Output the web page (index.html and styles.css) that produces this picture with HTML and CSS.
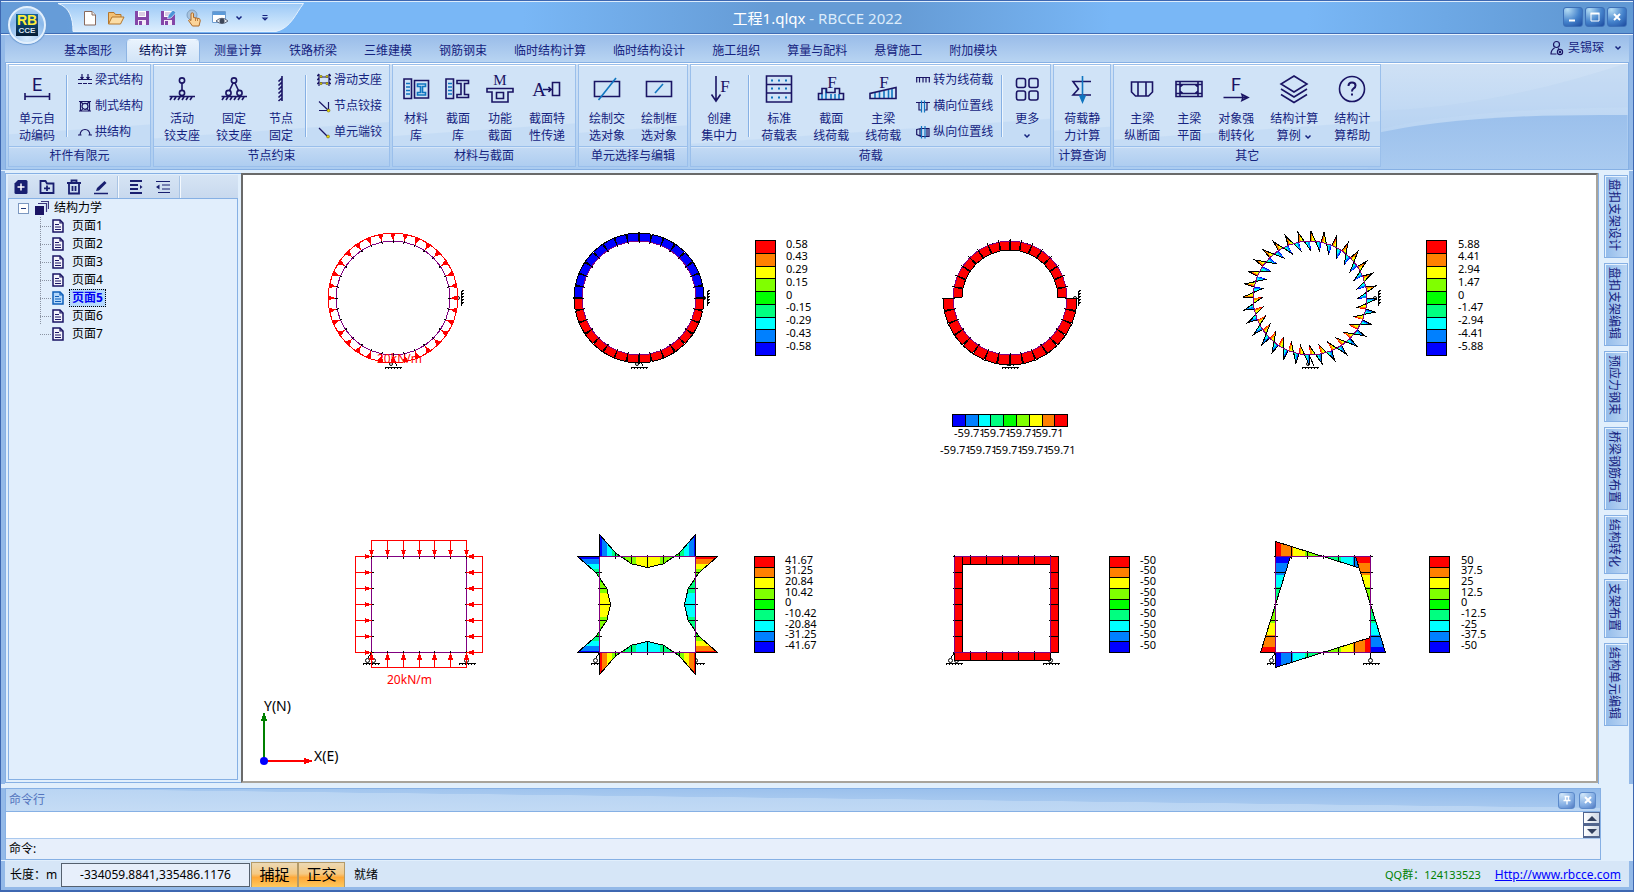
FILE: index.html
```
<!DOCTYPE html>
<html lang="zh-CN">
<head>
<meta charset="utf-8">
<title>工程1.qlqx - RBCCE 2022</title>
<link rel="stylesheet" href="styles.css">
</head>
<body>
<header class="titlebar">
  <div class="orb-space"></div>
  <button class="orb" aria-label="应用菜单"><span class="orb-logo"><span class="orb-rb">RB</span><span class="orb-cce">CCE</span></span></button>
  <div class="qat">
    <svg class="qat-shape" viewBox="0 0 246 30" preserveAspectRatio="none"><defs><linearGradient id="qg" x1="0" y1="0" x2="0" y2="1"><stop offset="0" stop-color="#9cc8f6"/><stop offset=".5" stop-color="#bcdcfa"/><stop offset="1" stop-color="#dcedfd"/></linearGradient></defs><path d="M0 .5C11 4 15 14 15 28.500H218C233 25 238 10 245.500.5Z" fill="url(#qg)" stroke="#e6f2fe"/></svg>
    <button class="qat-btn" aria-label="新建"><svg width="18" height="18" viewBox="0 0 18 18"><path d="M3.500 2.500H11L14.500 6V16H3.500Z" fill="#fff" stroke="#8a6a5c"/><path d="M11 2.500V6H14.500" fill="#eee" stroke="#8a6a5c"/></svg></button>
    <button class="qat-btn" aria-label="打开"><svg width="18" height="18" viewBox="0 0 18 18"><path d="M1.500 15V3.500H7L8.500 5.500H14V8" fill="#f3c074" stroke="#b5762b"/><path d="M1.500 15L5 8H17L13.500 15Z" fill="#fbdda6" stroke="#b5762b"/></svg></button>
    <button class="qat-btn" aria-label="保存"><svg width="18" height="18" viewBox="0 0 18 18"><path d="M2 2H16V16H2Z" fill="#8446a8"/><path d="M5 2H13V8H5Z" fill="#fff"/><path d="M6 4H12M6 6H12" stroke="#b79ac9"/><path d="M5 11H13V16H5Z" fill="#f3e9f8"/><path d="M6 12H9V16H6Z" fill="#8446a8"/></svg></button>
    <button class="qat-btn" aria-label="另存为"><svg width="18" height="18" viewBox="0 0 18 18"><path d="M2 2H16V16H2Z" fill="#8446a8"/><path d="M5 2H13V8H5Z" fill="#fff"/><path d="M6 4H12M6 6H10" stroke="#b79ac9"/><path d="M5 11H13V16H5Z" fill="#f3e9f8"/><path d="M6 12H9V16H6Z" fill="#8446a8"/><path d="M8.500 9.500L9.500 6L14 1L17 3.500L12 9Z" fill="#4a94d8" stroke="#e6f2fe" stroke-width=".7"/></svg></button>
    <button class="qat-btn" aria-label="触摸"><svg width="18" height="18" viewBox="0 0 18 18"><circle cx="7" cy="6" r="5" fill="#a9c3dd" stroke="#7fa0c2"/><path d="M6 4.500Q7.200 3 8.500 4.500V8.500L14 9.500Q15.500 10 15.200 12L14 17H7.500L3.500 11.500Q4 10 6 11.500Z" fill="#fbd49a" stroke="#b06a26"/><path d="M10.500 9V12M12.500 9.500V12" stroke="#b06a26" stroke-width=".8"/></svg></button>
    <button class="qat-btn" aria-label="视图"><svg width="18" height="18" viewBox="0 0 18 18"><path d="M1.500 2.500H14.500V13.500H1.500Z" fill="#fff" stroke="#6d9cd0"/><path d="M2 3H14V6H2Z" fill="#5c9ad8"/><path d="M5 12Q11 6.500 17 12Q11 17 5 12Z" fill="#e8ecf2" stroke="#5a6478"/><circle cx="11" cy="12" r="2.500" fill="#3c4658"/></svg></button>
    <button class="qat-drop" aria-label="视图选项"><svg width="8" height="6" viewBox="0 0 8 6"><path d="M1.500 1.500L4 4L6.500 1.500" class="chev"/></svg></button>
    <button class="qat-more" aria-label="自定义快速访问工具栏"><svg width="8" height="8" viewBox="0 0 8 8"><path d="M1.500 1.500H6.500M2 4L4 6L6 4Z" class="chev thin-chev"/></svg></button>
  </div>
  <h1 class="title">工程1.qlqx <span class="title-app">- RBCCE 2022</span></h1>
  <div class="winbtns">
    <button class="winbtn" aria-label="最小化"><svg width="12" height="12" viewBox="0 0 12 12"><path d="M2 9.500H8" stroke="#fff" stroke-width="2"/></svg></button>
    <button class="winbtn" aria-label="最大化"><svg width="12" height="12" viewBox="0 0 12 12"><path d="M2 2.500H10V10H2Z" fill="none" stroke="#fff"/><path d="M1.500 2.500H10.500" stroke="#fff" stroke-width="2"/></svg></button>
    <button class="winbtn" aria-label="关闭"><svg width="12" height="12" viewBox="0 0 12 12"><path d="M3 3L9 9M9 3L3 9" stroke="#fff" stroke-width="2"/></svg></button>
  </div>
</header>

<nav class="tabs">
  <button class="tab">基本图形</button><button class="tab active">结构计算</button><button class="tab">测量计算</button><button class="tab">铁路桥梁</button><button class="tab">三维建模</button><button class="tab">钢筋钢束</button><button class="tab">临时结构计算</button><button class="tab">临时结构设计</button><button class="tab">施工组织</button><button class="tab">算量与配料</button><button class="tab">悬臂施工</button><button class="tab">附加模块</button>
  <button class="user"><svg width="14" height="16" viewBox="0 0 14 16" class="ln"><circle cx="6.500" cy="4.500" r="3"/><path d="M4.500 8Q1 10 1 14H6.500M8 8.500L9 9"/><circle cx="10" cy="12" r="2.600"/><circle cx="10" cy="12" r=".6"/></svg><span>吴锡琛</span><svg class="user-chev" width="8" height="6" viewBox="0 0 8 6"><path d="M1.500 1.500L4 4L6.500 1.500" class="chev"/></svg></button>
</nav>

<section class="ribbon">
  <div class="group"><div class="group-body">
    <button class="big"><svg class="ic" viewBox="0 0 28 28"><text x="14" y="16" class="sans">E</text><path d="M2 21.500H27M2 18V25M26.500 18V25"/></svg><span>单元自<br>动编码</span></button>
    <i class="sep"></i>
    <div class="smalls">
      <button class="small"><svg class="is" viewBox="0 0 14 14"><path d="M0 10.500H4M5 10.500H9M10 10.500H14M0 6.500H14M4 1V6M10 1V6M2.500 4L4 6L5.500 4M8.500 4L10 6L11.500 4"/></svg>梁式结构</button>
      <button class="small"><svg class="is" viewBox="0 0 14 14"><path d="M1 2.500H13M1 12H13M2.500 2V12M11.500 2V12"/><circle cx="7" cy="7.300" r="3"/><path d="M3 3L5 5M11 3L9 5M3 12L5 9.500M11 12L9 9.500"/></svg>制式结构</button>
      <button class="small"><svg class="is" viewBox="0 0 14 14"><path d="M2 10Q2.500 4.500 7 4.500Q11.500 4.500 12 10M0 10H3.500M10.500 10H14"/></svg>拱结构</button>
    </div></div><h2>杆件有限元</h2></div>

  <div class="group"><div class="group-body">
    <button class="big"><svg class="ic" viewBox="0 0 28 28"><circle cx="14" cy="5.500" r="2.600"/><path d="M14 8V15.500M1.500 21.500H27M4 22L2 25M8 22L6 25M12 22L10 25M16 22L14 25M20 22L18 25M24 22L22 25"/><circle cx="14" cy="18" r="2.600"/></svg><span>活动<br>铰支座</span></button>
    <button class="big"><svg class="ic" viewBox="0 0 28 28"><circle cx="14" cy="5.500" r="2.600"/><path d="M13 8L9.500 15.500M15 8L18.500 15.500M1.500 21.500H27M4 22L2 25M8 22L6 25M12 22L10 25M16 22L14 25M20 22L18 25M24 22L22 25"/><circle cx="8.500" cy="18" r="2.600"/><circle cx="19.500" cy="18" r="2.600"/></svg><span>固定<br>铰支座</span></button>
    <button class="big"><svg class="ic" viewBox="0 0 28 28"><path d="M15 1V26M15 3L11.500 6.500M15 7L11.500 10.500M15 11L11.500 14.500M15 15L11.500 18.500M15 19L11.500 22.500M15 23L11.500 26"/></svg><span>节点<br>固定</span></button>
    <i class="sep"></i>
    <div class="smalls">
      <button class="small"><svg class="is" viewBox="0 0 14 14"><path d="M2 1V13M12 1V13M3 4H11M3 10H11M0 3L2 1M0 7L2 5M0 11L2 9M14 3L12 1M14 7L12 5M14 11L12 9"/><path d="M3 2.500h2v2H3zM9 2.500h2v2H9zM3 9.500h2v2H3zM9 9.500h2v2H9z" class="gold"/></svg>滑动支座</button>
      <button class="small"><svg class="is" viewBox="0 0 14 14"><path d="M2 2.500L11 11M2 11.500H11M11.500 3V11"/><circle cx="11.500" cy="11.500" r="1.500" class="gold"/></svg>节点铰接</button>
      <button class="small"><svg class="is" viewBox="0 0 14 14"><path d="M2 3L10 11"/><circle cx="11" cy="11.500" r="1.500" class="gold"/></svg>单元端铰</button>
    </div></div><h2>节点约束</h2></div>

  <div class="group"><div class="group-body">
    <button class="big"><svg class="ic" viewBox="0 0 28 28"><path d="M2 4H9.500V23.500H2ZM12.500 5.500H26.500V23H12.500Z"/><path d="M4 8.500H8M4 12H8M4 15.500H8M4 19H8M15.500 9H23.500V11.500H20.500V17.500H23.500V20H15.500V17.500H18.500V11.500H15.500Z" class="bl"/></svg><span>材料<br>库</span></button>
    <button class="big"><svg class="ic" viewBox="0 0 28 28"><path d="M2 4H9.500V23.500H2ZM13 5.500H24.500V8.500H20.500V19.500H24.500V22.500H13V19.500H17V8.500H13Z"/><path d="M4 8.500H8M4 12H8M4 15.500H8M4 19H8" class="bl"/></svg><span>截面<br>库</span></button>
    <button class="big"><svg class="ic" viewBox="0 0 28 28"><text x="14" y="10" class="serif m">M</text><path d="M1 13.500H27V17H22V27H6V17H1ZM10.500 17.500H17.500V23.500H10.500Z"/></svg><span>功能<br>截面</span></button>
    <button class="big"><svg class="ic" viewBox="0 0 28 28"><text x="6" y="21" class="serif a">A</text><path d="M10 14.500H18M15.500 12L18 14.500L15.500 17M19.500 7.500H26.500V20.500H19.500Z"/></svg><span>截面特<br>性传递</span></button>
  </div><h2>材料与截面</h2></div>

  <div class="group"><div class="group-body">
    <button class="big"><svg class="ic" viewBox="0 0 28 28"><path d="M1.500 6.500H26.500V21.500H1.500Z"/><path d="M5.500 25L23 3" class="bl"/></svg><span>绘制交<br>选对象</span></button>
    <button class="big"><svg class="ic" viewBox="0 0 28 28"><path d="M1.500 6.500H26.500V21.500H1.500Z"/><path d="M10 18L18 9" class="bl"/></svg><span>绘制框<br>选对象</span></button>
  </div><h2>单元选择与编辑</h2></div>

  <div class="group"><div class="group-body">
    <button class="big"><svg class="ic" viewBox="0 0 28 28"><path d="M11 1V25M6.500 19.500L11 26L15.500 19.500"/><text x="20" y="17" class="serif">F</text></svg><span>创建<br>集中力</span></button>
    <i class="sep"></i>
    <button class="big"><svg class="ic" viewBox="0 0 28 28"><path d="M1.500 1H26.500V27H1.500ZM1.500 9.500H26.500M1.500 18H26.500"/><path d="M6 5.500h2M13 5.500h2M20 5.500h2M6 13.500h2M13 13.500h2M20 13.500h2M6 22.500h2M13 22.500h2M20 22.500h2" class="bl dots"/></svg><span>标准<br>荷载表</span></button>
    <button class="big"><svg class="ic" viewBox="0 0 28 28"><text x="15" y="13" class="serif">F</text><path d="M5 19V24M9 14V24M14 19V24M18 19V24M22 19V24" class="bl"/><path d="M1.500 24.500V18.500H5V13.500H9.500V17.500H18V13.500H22.500V18.500H26.500V24.500Z"/></svg><span>截面<br>线荷载</span></button>
    <button class="big"><svg class="ic" viewBox="0 0 28 28"><text x="15" y="13" class="serif">F</text><path d="M6 18V23M10.500 17V23M15 16V23M19.500 15V23M23 14V23" class="bl"/><path d="M1 23.500V18.500L27 12.500V23.500Z"/></svg><span>主梁<br>线荷载</span></button>
    <div class="smalls">
      <button class="small"><svg class="is" viewBox="0 0 14 14"><path d="M0 4.500H14M.7 5V9.500M3.500 5V9.500M7 5V9.500M10 5V9.500M13.300 5V9.500"/></svg>转为线荷载</button>
      <button class="small"><svg class="is" viewBox="0 0 14 14"><path d="M0 3.500H14M3 4V11H6M11 4V11H8"/><path d="M5.500 1.500V13.500M8.500 1.500V13.500" class="bl"/></svg>横向位置线</button>
      <button class="small"><svg class="is" viewBox="0 0 14 14"><path d="M.7 4.500L5 3.500H13V11.500H5L.7 9.500ZM4 4V11M11 4V11"/><path d="M5.500 1V13.500M9 1V13.500" class="bl"/></svg>纵向位置线</button>
    </div>
    <i class="sep"></i>
    <button class="big"><svg class="ic" viewBox="0 0 28 28"><rect x="3.500" y="3.500" width="9" height="9" rx="2"/><rect x="16" y="3.500" width="9" height="9" rx="2"/><rect x="3.500" y="16" width="9" height="9" rx="2"/><rect x="16" y="16" width="9" height="9" rx="2"/></svg><span>更多<br><svg width="8" height="8" viewBox="0 0 8 8"><path d="M1.500 1.500L4 4L6.500 1.500" class="chev"/></svg></span></button>
  </div><h2>荷载</h2></div>

  <div class="group"><div class="group-body">
    <button class="big"><svg class="ic" viewBox="0 0 28 28"><path d="M23 6.500H5L10.500 14L5 20H23"/><path d="M14.500 1V23M12 21L14.500 27L17 21Z" class="bl fillbl"/></svg><span>荷载静<br>力计算</span></button>
  </div><h2>计算查询</h2></div>

  <div class="group"><div class="group-body">
    <button class="big"><svg class="ic" viewBox="0 0 28 28"><path d="M3.500 7H24.500V17L20.500 21H7.500L3.500 17ZM10 7V21M18 7V21"/></svg><span>主梁<br>纵断面</span></button>
    <button class="big"><svg class="ic" viewBox="0 0 28 28"><path d="M1 6.500H27V21.500H1ZM1 9.500H27M1 18.500H27M5 6.500V21.500M23 6.500V21.500M5 12L8 9.500M23 12L20 9.500M5 16L8 18.500M23 16L20 18.500"/></svg><span>主梁<br>平面</span></button>
    <button class="big"><svg class="ic" viewBox="0 0 28 28"><text x="14" y="16" class="sans">F</text><path d="M1.500 22.500H25M20 19.500L26 22.500L20 25.500L21 22.500Z"/></svg><span>对象强<br>制转化</span></button>
    <button class="big"><svg class="ic" viewBox="0 0 28 28"><path d="M14 1L27 9L14 17L1 9ZM1 14L14 22L27 14M1 19.500L14 27.500L27 19.500"/></svg><span>结构计算<br>算例 <svg width="8" height="8" viewBox="0 0 8 8"><path d="M1.500 2.500L4 5L6.500 2.500" class="chev"/></svg></span></button>
    <button class="big"><svg class="ic" viewBox="0 0 28 28"><circle cx="14" cy="14" r="12.500"/><path d="M10.500 11Q10.500 7.500 14 7.500Q17.500 7.500 17.500 10.500Q17.500 12.500 15.500 13.500Q14 14.500 14 16.500M14 18.500V20.500" stroke-width="2"/></svg><span>结构计<br>算帮助</span></button>
  </div><h2>其它</h2></div>
  <svg class="swoosh" viewBox="0 0 260 110" preserveAspectRatio="none"><defs><linearGradient id="sw" x1="0" y1="0" x2="0" y2="1"><stop offset="0" stop-color="#92baea"/><stop offset="1" stop-color="#a9caf0"/></linearGradient></defs><path d="M0 72Q80 48 260 46V0H260Q120 48 0 50Z" fill="#b4d0f1" opacity=".25"/><path d="M0 75Q90 52 260 54V110H0Z" fill="url(#sw)" opacity=".8"/></svg>
</section>

<main class="work">
  <aside class="panel">
    <div class="panel-tools">
      <button aria-label="新建页面"><svg width="16" height="16" viewBox="0 0 16 16"><path d="M5 1H13Q14.500 1 14.500 2.500V13.500Q14.500 15 13 15H3Q1.500 15 1.500 13.500V4.500Z" fill="#191f70"/><path d="M8 4.500V11.500M4.500 8H11.500" stroke="#fff" stroke-width="1.500"/></svg></button>
      <button aria-label="新建文件夹"><svg width="16" height="16" viewBox="0 0 16 16" class="tk"><path d="M1.500 2H6.500L8 4.500H14.500V14H1.500ZM8 6.500V12M5 9.300H11"/></svg></button>
      <button aria-label="删除"><svg width="16" height="16" viewBox="0 0 16 16" class="tk"><path d="M1 4H15M5.500 4V1.500H10.500V4M3 4V14.500H13V4M6.500 7V12M9.500 7V12"/></svg></button>
      <button aria-label="重命名"><svg width="16" height="16" viewBox="0 0 16 16"><path d="M3 12L4 9L11.500 2L13.500 4L6 11.500Z" fill="#191f70"/><path d="M1 14.500H15" stroke="#191f70" stroke-width="1.500"/></svg></button>
      <i></i>
      <button aria-label="展开"><svg width="16" height="16" viewBox="0 0 16 16" class="tk"><path d="M2 2H14M2 6H10M2 10H10M2 14H14"/><path d="M12 6L14.500 8L12 10Z" fill="#191f70" stroke="none"/></svg></button>
      <button aria-label="折叠"><svg width="16" height="16" viewBox="0 0 16 16" class="tk thin"><path d="M1 2.500H15M7 6H15M7 10H15M3 13.500H15"/><path d="M4.500 5.500L1 8L4.500 10.500Z" fill="#191f70" stroke="none"/></svg></button>
      <i></i>
    </div>
    <div class="tree">
      <div class="root"><button class="toggle" aria-label="折叠节点"></button><svg width="14" height="14" viewBox="0 0 14 14"><path d="M0 5H9V14H0Z" fill="#1a1464"/><path d="M3 2.500H11.500V11M6 .5H13.500V8" fill="none" stroke="#3d3880" stroke-width="1.200"/></svg><span>结构力学</span></div>
      <ul class="pages" id="pages"></ul>
    </div>
  </aside>
  <div class="canvas"><svg id="drawing" class="drawing" role="img" aria-label="内力图"></svg></div>
  <nav class="dock">
    <button>盘扣支架设计</button><button>盘扣支架编辑</button><button>预应力钢束</button><button>桥梁钢筋布置</button><button>结构转化</button><button>支架布置</button><button>结构单元编辑</button>
  </nav>
</main>

<section class="command">
  <div class="command-head"><h2>命令行</h2>
    <button class="mini" aria-label="固定"><svg width="10" height="10" viewBox="0 0 10 10"><path d="M2.500 1.500H7.500M3.500 1V5.500M6.500 1V5.500M1.500 5.500H8.500M5 6V9.500" stroke="#fff" stroke-width="1.300" fill="none"/></svg></button>
    <button class="mini" aria-label="关闭命令行"><svg width="10" height="10" viewBox="0 0 10 10"><path d="M2 2L8 8M8 2L2 8" stroke="#fff" stroke-width="2"/></svg></button>
  </div>
  <div class="history"><textarea aria-label="命令历史" readonly></textarea><div class="spin"><button aria-label="向上"><svg width="10" height="5" viewBox="0 0 10 5"><path d="M0 5L5 0L10 5Z" fill="#33405e"/></svg></button><button aria-label="向下"><svg width="10" height="5" viewBox="0 0 10 5"><path d="M0 0L5 5L10 0Z" fill="#33405e"/></svg></button></div></div>
  <div class="prompt"><label for="cmd">命令:</label><input id="cmd" type="text"></div>
</section>

<footer class="status">
  <span class="unit">长度：m</span>
  <output class="coords">-334059.8841,335486.1176</output>
  <button class="mode">捕捉</button><button class="mode">正交</button>
  <span class="ready">就绪</span>
  <span class="qq">QQ群：124133523</span>
  <a href="#">Http://www.rbcce.com</a>
</footer>
<script src="script.js"></script>
</body>
</html>
```
FILE: styles.css
```
* { box-sizing: border-box; }
body {
  margin: 0;
  height: 100vh;
  min-height: 600px;
  display: flex;
  flex-direction: column;
  overflow: hidden;
  border: 1px solid #3d67b1;
  border-bottom-width: 2px;
  background: #e1effc;
  font: 12px/18px "Noto Sans", "Noto Sans CJK SC", sans-serif;
  color: #15237f;
}
button { border: 0; padding: 0; margin: 0; background: none; font: inherit; color: inherit; }
h1, h2 { margin: 0; font: inherit; }
svg { display: block; }
.chev { fill: none; stroke: #15237f; stroke-width: 1.500; }
.thin-chev { stroke-width: 1.100; }
.ln { fill: none; stroke: #1a1464; stroke-width: 1.200; }

/* title bar */
.titlebar {
  position: relative;
  flex: none;
  height: 33px;
  display: flex;
  align-items: stretch;
  border-top: 1px solid #dcecfc;
  border-bottom: 1px solid #3f6cb5;
  background: linear-gradient(90deg, #669cd8 0, #669cd8 4%, #79b7f6 14%, #79b7f6 32%, #659bd5 47%, #659bd5 55%, #79b7f6 68%, #79b7f6 80%, #6199d4 97%);
}
.orb-space { width: 57px; flex: none; }
.orb {
  position: absolute;
  z-index: 3;
  left: 7px;
  top: 4px;
  width: 38px;
  height: 38px;
  border: 2px solid #e3f0fd;
  border-radius: 50%;
  background: radial-gradient(circle at 50% 90%, #d8ebfc, #8ab8ea 60%, #b9d8f6);
  box-shadow: 0 0 1px 1px #6a9ad2;
}
.orb-logo { display: block; width: 22px; height: 22px; margin: auto; text-align: center; background: linear-gradient(#14639c, #061c33); }
.orb-rb { display: block; font: bold 14px/13px "Liberation Sans", sans-serif; color: #ffee3a; }
.orb-cce { display: block; font: bold 8px/8px "Liberation Sans", sans-serif; color: #dce6f0; }
.qat { position: relative; width: 246px; flex: none; padding-left: 19px; display: flex; align-items: center; }
.qat-shape { position: absolute; left: 0; top: 1px; width: 100%; height: 30px; }
.qat button { position: relative; display: grid; place-items: center; height: 26px; }
.qat-btn { width: 26px; }
.qat-drop { width: 12px; }
.qat-more { width: 40px; }
.title { flex: 1; text-align: center; font-size: 15px; line-height: 32px; color: #fff; padding-right: 302px; }
.title-app { color: #dcebfb; }
.winbtns { position: absolute; right: 6px; top: 5px; display: flex; gap: 2px; }
.winbtn {
  width: 20px;
  height: 20px;
  display: grid;
  place-items: center;
  border: 1px solid #3d70b8;
  border-radius: 3px;
  background: radial-gradient(circle at 20% 10%, #b4dcf4, #4583cc 55%, #1c4a9e);
}

/* tabs */
.tabs {
  flex: none;
  height: 28px;
  display: flex;
  align-items: flex-end;
  gap: 3px;
  padding: 0 11px 0 51px;
  border-top: 1px solid #eaf4fe;
  box-shadow: inset 4px 0 #93b9e8, inset -4px 0 #93b9e8;
  background: linear-gradient(#99bce9, #b8d4f2);
}
.tab { height: 22px; padding: 0 12px; line-height: 22px; }
.tab.active { color: #000a50; border-radius: 4px 4px 0 0; background: linear-gradient(#e9f3fd, #d2e4f7); box-shadow: 0 -1px #f6fbff, -1px 0 #8db4e3, 1px 0 #8db4e3; }
.user { margin-left: auto; height: 28px; display: flex; align-items: center; gap: 4px; }
.user-chev { margin-left: 6px; }

/* ribbon */
.ribbon {
  position: relative;
  flex: none;
  height: 108px;
  display: flex;
  align-items: flex-start;
  gap: 2px;
  margin: 0 4px;
  padding: 1px 2px;
  border: 1px solid #86b0e4;
  background: linear-gradient(#cfe1f5, #c3daf4 40%, #abccf0);
  box-shadow: inset 0 1px #fff, -4px 0 #93b9e8, 4px 0 #93b9e8;
}
.group {
  position: relative;
  z-index: 1;
  height: 103px;
  display: flex;
  flex-direction: column;
  border: 1px solid #9abfeb;
  background: linear-gradient(176deg, #d0e3f7 0, #d0e3f7 62%, #c5dcf5 63%);
  box-shadow: inset 0 1px #fff;
}
.group-body { flex: 1; display: flex; padding: 0 2px; }
.group h2 { height: 20px; line-height: 18px; text-align: center; border-top: 1px solid #9abfeb; background: linear-gradient(#c3daf4, #aecdf0); box-shadow: inset 0 1px #d6e6f8; }
.big { min-width: 42px; padding: 10px 8px 0; display: flex; flex-direction: column; align-items: center; gap: 7px; line-height: 17px; white-space: nowrap; }
.big span svg { display: inline-block; vertical-align: middle; }
.ic { width: 28px; height: 28px; margin: 0 -2px; overflow: visible; }
.ic, .is { fill: none; stroke: #1a1464; stroke-width: 1.600; flex: none; }
.is { width: 14px; height: 14px; stroke-width: 1.200; }
.ic text { fill: #1a1464; stroke: none; text-anchor: middle; }
.sans { font: 18px Roboto, sans-serif; }
.serif { font: 17px "Liberation Serif", serif; }
.ic .m { font-size: 15px; }
.ic .a { font-size: 19px; }
.bl { stroke: #0f75c0; }
.fillbl { fill: #0f75c0; }
.dots { stroke-width: 2; }
.gold { fill: #e8d800; stroke: #5d5210; stroke-width: .5; }
.sep { width: 2px; height: 62px; margin: 10px 3px 0; border-left: 1px solid #86b0e4; border-right: 1px solid #eef6fe; }
.smalls { display: flex; flex-direction: column; padding: 2px 5px 0 7px; }
.small { height: 26px; display: flex; align-items: center; gap: 3px; white-space: nowrap; }
.swoosh { position: absolute; right: 0; top: 0; width: 16%; height: 100%; }

/* work area */
.work { flex: 1; min-height: 0; display: flex; margin: 1px 4px 0; padding: 2px 0 0; box-shadow: -4px 0 #93b9e8, 4px 0 #93b9e8; }
.panel { width: 236px; flex: none; display: flex; flex-direction: column; padding: 1px 3px 2px 2px; border: 1px solid #86b0e4; border-right: 0; margin-bottom: 1px; }
.panel-tools { height: 23px; flex: none; display: flex; align-items: center; background: linear-gradient(#d6e4f4, #c8d9ee); }
.panel-tools button { width: 27px; height: 22px; display: grid; place-items: center; }
.panel-tools button:first-child { width: 25px; }
.panel-tools i { width: 2px; height: 22px; margin: 0 3px; border-left: 1px solid #a9c4e4; border-right: 1px solid #f4f9fe; }
.tk { fill: none; stroke: #191f70; stroke-width: 1.800; }
.thin { stroke-width: 1.200; }
.tree { flex: 1; border: 1px solid #86b0e4; background: #e1eefc; color: #000; }
.root { display: flex; align-items: center; height: 18px; padding-left: 9px; }
.toggle { position: relative; width: 11px; height: 11px; border: 1px solid #7c98c0; background: #fff; margin-right: 6px; }
.toggle::before { content: ""; position: absolute; left: 2px; top: 4px; width: 5px; height: 1px; background: #223a7a; }
.root span { margin-left: 5px; }
.pages { list-style: none; margin: 0 0 0 31px; padding: 0; }
.pages li { display: flex; align-items: center; height: 18px; background: linear-gradient(90deg, #8a93a3 50%, transparent 50%) 0 9px / 2px 1px repeat-x, linear-gradient(#8a93a3 50%, transparent 50%) 0 0 / 1px 2px repeat-y; }
.pages li:last-child { background: linear-gradient(90deg, #8a93a3 50%, transparent 50%) 0 9px / 2px 1px repeat-x; }
.pages li svg { margin-left: 12px; background: #e1eefc; }
.pages .label { flex: 1; background: #e1eefc; padding-left: 5px; height: 18px; display: flex; align-items: center; }
.pages button { height: 18px; line-height: 16px; padding: 0 2px; border: 1px solid transparent; }
.pages .on button { border: 1px dotted #000; background: #b5d8fb; color: #0000f5; font-weight: bold; }
.canvas { flex: 1; min-width: 0; background: #fff; border: 2px solid; border-color: #6a6a6a #a8a49c #a8a49c #6a6a6a; margin-bottom: 1px; }
.drawing { width: 100%; height: 100%; }
.lg { font: 11px "Noto Sans", sans-serif; fill: #000; }
.load { font: 12px "Noto Sans", sans-serif; fill: #f00; }
.axis { font: 14px "Noto Sans", sans-serif; fill: #000; }
.dock { width: 31px; flex: none; padding: 2px 0 0 5px; display: flex; flex-direction: column; gap: 5px; align-items: flex-start; border-left: 1px solid #86b0e4; }
.dock button { writing-mode: vertical-rl; text-orientation: sideways; width: 24px; padding: 3px 4px 6px 0; line-height: 18px; border: 1px solid #86b0e4; box-shadow: inset 1px 1px #e6f2fe; background: linear-gradient(90deg, #93bbea, #bcd7f4); color: #15237f; }

/* command line */
.command { flex: none; margin: 4px 32px 0 4px; border: 1px solid #86b0e4; background: #e7effb; box-shadow: -4px 0 #93b9e8; }
.command-head { height: 23px; display: flex; align-items: center; gap: 4px; padding: 0 4px 0 3px; border-bottom: 1px solid #86b0e4; background: linear-gradient(180.7deg, #90b9ea 0, #a6c8ef 45%, #bad5f3 46%, #c5dcf5 100%); }
.command-head h2 { flex: 1; color: #5374bd; }
.mini { width: 17px; height: 17px; display: grid; place-items: center; border: 1px solid #5c8acb; border-radius: 3px; background: radial-gradient(circle at 20% 10%, #cfe5f8, #84aee4 60%, #5078c0); }
.history { display: flex; height: 27px; background: #fff; border-bottom: 1px solid #a9c8ee; }
.history textarea { flex: 1; border: 0; padding: 2px; resize: none; outline: 0; background: #fff; }
.spin { width: 17px; display: flex; flex-direction: column; gap: 1px; padding: 0 0 1px; background: #52658e; }
.spin button { flex: 1; display: grid; place-items: center; border: 1px solid #52658e; background: linear-gradient(90deg, #fff, #cfd8e6); }
.prompt { height: 20px; display: flex; align-items: center; padding-left: 3px; color: #000; }
.prompt input { flex: 1; border: 0; background: none; outline: 0; font: inherit; }

/* status bar */
.status { flex: none; height: 29px; margin-top: 1px; display: flex; align-items: center; padding: 1px 12px 0 9px; color: #000; background: #d6e6f7; border-bottom: 3px solid #93b9e8; box-shadow: inset 4px 0 #93b9e8, inset -4px 0 #93b9e8; }
.unit { width: 51px; }
.coords { width: 189px; height: 24px; line-height: 22px; text-align: center; border: 1px solid #55606e; background: #e7effb; margin-right: 1px; }
.mode { width: 47px; height: 25px; font-size: 15px; line-height: 20px; padding-bottom: 3px; border: 1px solid #b39a68; border-bottom: 0; background: linear-gradient(#ecd9b4, #f5c983 45%, #fea837 60%, #ffc95e); }
.ready { margin-left: 9px; }
.qq { margin-left: auto; margin-right: 14px; color: #008000; font-size: 11px; }
.status a { color: #00f; }
```
FILE: script.js
```
const NS = 'http://www.w3.org/2000/svg';
const SCALE = ['#f00', '#ff8000', '#ff0', '#80ff00', '#0f0', '#00ff80', '#0ff', '#0080ff', '#00f'];
const PURPLE = '#800080';

const pages = document.getElementById('pages');
for (let i = 1; i <= 7; i++) {
  const li = document.createElement('li');
  const on = i === 5;
  const c = on ? '#0f5fb8' : '#1a1464';
  if (on) li.className = 'on';
  li.innerHTML = `<svg width="12" height="14" viewBox="0 0 12 14"><path d="M1 1H8L11 4V13H1Z" fill="${on ? '#b5d8fb' : '#f4f4fb'}" stroke="${c}" stroke-width="1.500"/><path d="M8 1V4H11M3 5.500H7M3 8H9M3 10.500H9" fill="none" stroke="${c}" stroke-width="1.200"/></svg><span class="label"><button>页面${i}</button></span>`;
  pages.append(li);
}

const svg = document.getElementById('drawing');
const layer = document.createElementNS(NS, 'g');
layer.setAttribute('transform', 'translate(-243 -175)');
svg.append(layer);

function add(tag, attrs, text) {
  const e = document.createElementNS(NS, tag);
  for (const k in attrs) e.setAttribute(k, attrs[k]);
  if (text !== undefined) e.textContent = text;
  layer.append(e);
  return e;
}
const pt = p => p[0].toFixed(2) + ',' + p[1].toFixed(2);
const poly = (pts, fill, stroke) => add('polygon', { points: pts.map(pt).join(' '), fill, stroke: stroke || 'none', 'shape-rendering': 'crispEdges' });
const path = (pts, stroke) => add('polyline', { points: pts.map(pt).join(' '), fill: 'none', stroke, 'shape-rendering': 'crispEdges' });
const label = (x, y, s, cls) => add('text', { x, y, class: cls }, s);
const polar = (cx, cy, r, a) => [cx + r * Math.sin(a), cy - r * Math.cos(a)];
const STEP = Math.PI / 16;

function arrow(from, to, len, half) {
  path([from, to], '#f00');
  const dx = to[0] - from[0], dy = to[1] - from[1], d = Math.hypot(dx, dy);
  const ux = dx / d, uy = dy / d, bx = to[0] - ux * len, by = to[1] - uy * len;
  poly([to, [bx - uy * half, by + ux * half], [bx + uy * half, by - ux * half]], '#f00');
}

function ring(cx, cy, r) {
  const pts = [];
  for (let i = 0; i <= 32; i++) pts.push(polar(cx, cy, r, i * STEP));
  return pts;
}

function ringTicks(cx, cy) {
  path(ring(cx, cy, 57), PURPLE);
  for (let i = 0; i < 32; i++) path([polar(cx, cy, 55, i * STEP), polar(cx, cy, 59, i * STEP)], '#000');
}

function ground(x, y) {
  path([[x - 8, y], [x + 8, y]], '#000');
  for (let i = -8; i < 8; i += 3) path([[x + i + 2, y], [x + i, y + 2]], '#000');
}

function ringSupports(cx, cy) {
  ground(cx, cy + 69);
  add('circle', { cx: cx - 2, cy: cy + 66, r: 1.5, fill: 'none', stroke: '#000' });
  path([[cx, cy + 59], [cx - 2, cy + 64]], '#000');
  path([[cx, cy + 59], [cx + 4, cy + 68]], '#000');
  const x = cx + 68;
  path([[x, cy - 7], [x, cy + 8]], '#000');
  for (let i = -6; i < 8; i += 3) path([[x, cy + i], [x + 3, cy + i - 2]], '#000');
  add('circle', { cx: x - 3, cy, r: 1.5, fill: 'none', stroke: '#000' });
}

function frameSupports(x0, x1, y) {
  ground(x0 - 1, y + 11);
  add('circle', { cx: x0 - 4, cy: y + 8, r: 2, fill: 'none', stroke: '#000' });
  add('circle', { cx: x0 + 2, cy: y + 8, r: 2, fill: 'none', stroke: '#000' });
  path([[x0, y], [x0 - 4, y + 6]], '#000');
  ground(x1, y + 11);
  add('circle', { cx: x1, cy: y + 8, r: 2, fill: 'none', stroke: '#000' });
  path([[x1, y], [x1, y + 6]], '#000');
}

function legend(x, y, h, tx, values) {
  const step = h / 9;
  SCALE.forEach((c, i) => {
    const top = Math.round(i * step), bottom = Math.round((i + 1) * step);
    add('rect', { x, y: y + top, width: 20, height: bottom - top, fill: c, stroke: '#000' });
    label(tx, Math.round(y + i * step + 7), values[i], 'lg');
  });
}

/* Load on the ring */
let cx = 393, cy = 298;
ringSupports(cx, cy);
ringTicks(cx, cy);
path(ring(cx, cy, 65), '#f00');
for (let i = 0; i < 32; i++) arrow(polar(cx, cy, 65, i * STEP), polar(cx, cy, 58, i * STEP), 7, 3);
label(377, 363, '20kN/m', 'load');

/* Constant-value bands around a ring */
function ringBand(cx, cy, from, to, r0, r1, fill) {
  for (let i = from; i < to; i++) {
    const a = i * STEP, b = a + STEP;
    poly([polar(cx, cy, r0, a), polar(cx, cy, r1, a + .01), polar(cx, cy, r1, b - .01), polar(cx, cy, r0, b)], fill, '#000');
  }
}
cx = 639;
ringSupports(cx, cy);
ringBand(cx, cy, -8, 8, 57, 65, '#00f');
ringBand(cx, cy, 8, 24, 57, 65, '#f00');
ringTicks(cx, cy);
legend(755.5, 240.5, 115, 786, ['0.58', '0.43', '0.29', '0.15', '0', '-0.15', '-0.29', '-0.43', '-0.58']);

cx = 1010;
ringSupports(cx, cy);
ringBand(cx, cy, -8, 8, 57, 48, '#f00');
ringBand(cx, cy, 8, 24, 57, 67, '#f00');
ringTicks(cx, cy);
SCALE.slice().reverse().forEach((c, i) => add('rect', { x: 952.5 + Math.round(i * 12.8), y: 414.5, width: 13, height: 12, fill: c, stroke: '#000' }));
for (let i = 0; i < 4; i++) label(954 + 26 * i, 437, '-59.71', 'lg');
for (let i = 0; i < 5; i++) label(940 + 26 * i, 454, '-59.71', 'lg');

/* Sawtooth moment diagram */
cx = 1310;
ringSupports(cx, cy);
for (let i = 0; i < 32; i++) {
  const a = i * STEP, sign = i < 8 || i >= 24 ? 1 : -1, n = 18;
  const at = (t, r) => {
    const p = polar(cx, cy, 57, a), q = polar(cx, cy, 57, a + STEP), m = a + STEP / 2;
    return [p[0] + (q[0] - p[0]) * t + r * Math.sin(m), p[1] + (q[1] - p[1]) * t - r * Math.cos(m)];
  };
  const off = t => 10 - 20 * t;
  for (let k = 0; k < n; k++) {
    const t0 = k / n, t1 = (k + 1) / n, r = sign * off((t0 + t1) / 2) / 10;
    poly([at(t0, 0), at(t0, off(t0)), at(t1, off(t1)), at(t1, 0)], SCALE[Math.round((1 - r) * 4)]);
  }
  path([at(0, 0), at(0, 10), at(1, -10)], '#000');
}
path(ring(cx, cy, 57), PURPLE);
legend(1426.5, 240.5, 115, 1458, ['5.88', '4.41', '2.94', '1.47', '0', '-1.47', '-2.94', '-4.41', '-5.88']);

/* Square frames */
const Y0 = 556.5, Y1 = 652.5;
function frame(x0, x1) {
  path([[x0, Y0], [x1, Y0], [x1, Y1], [x0, Y1], [x0, Y0]], PURPLE);
}
function side(p, q, n, off, sign, max) {
  const at = (t, o) => [p[0] + (q[0] - p[0]) * t + n[0] * o, p[1] + (q[1] - p[1]) * t + n[1] * o];
  const lin = t => {
    const k = Math.min(5, Math.floor(t * 6)), f = t * 6 - k;
    return off(k / 6) * (1 - f) + off((k + 1) / 6) * f;
  };
  for (let k = 0; k < 96; k++) {
    const a = k / 96, b = (k + 1) / 96;
    const r = Math.max(-1, Math.min(1, sign * lin((a + b) / 2) / max));
    poly([at(a, 0), at(a, lin(a)), at(b, lin(b)), at(b, 0)], SCALE[Math.round((1 - r) * 4)]);
  }
  const pts = [at(0, 0)];
  for (let k = 0; k <= 6; k++) {
    pts.push(at(k / 6, off(k / 6)));
    path([at(k / 6, 0), at(k / 6, off(k / 6))], '#000');
    path([at(k / 6, -2), at(k / 6, 2)], '#000');
  }
  pts.push(at(1, 0));
  path(pts, '#000');
}
function sides(x0, x1, spec) {
  const ends = {
    left: [[x0, Y0], [x0, Y1], [-1, 0]],
    top: [[x0, Y0], [x1, Y0], [0, -1]],
    bottom: [[x0, Y1], [x1, Y1], [0, 1]],
    right: [[x1, Y0], [x1, Y1], [1, 0]]
  };
  for (const s of spec) side(...ends[s[0]], s[1], s[2], s[3]);
  frame(x0, x1);
}

let x0 = 371.5, x1 = 466.5;
frameSupports(x0, x1, Y1);
frame(x0, x1);
path([[x0, Y0], [x0, Y0 - 16], [x1, Y0 - 16], [x1, Y0]], '#f00');
path([[x0, Y1], [x0, Y1 + 15], [x1, Y1 + 15], [x1, Y1]], '#f00');
path([[x0, Y0], [x0 - 16, Y0], [x0 - 16, Y1], [x0, Y1]], '#f00');
path([[x1, Y0], [x1 + 16, Y0], [x1 + 16, Y1], [x1, Y1]], '#f00');
for (let i = 0; i <= 6; i++) {
  const x = x0 + Math.round((x1 - x0) * i / 6), y = Y0 + 16 * i;
  path([[x, Y0 - 2], [x, Y0 + 2]], '#000');
  path([[x, Y1 - 2], [x, Y1 + 2]], '#000');
  path([[x0 - 2, y], [x0 + 2, y]], '#000');
  path([[x1 - 2, y], [x1 + 2, y]], '#000');
  arrow([x, Y0 - 16], [x, Y0], 7, 2.4);
  arrow([x, Y1 + 15], [x, Y1], 7, 2.4);
  arrow([x0 - 16, y], [x0, y], 7, 2.4);
  arrow([x1 + 16, y], [x1, y], 7, 2.4);
}
label(387, 684, '20kN/m', 'load');

const moment = t => 22 - 33 * (1 - (2 * t - 1) ** 2);
frameSupports(599.5, 695.5, Y1);
sides(599.5, 695.5, [['left', moment, -1, 22], ['top', moment, -1, 22], ['bottom', moment, 1, 22], ['right', moment, 1, 22]]);
legend(754.5, 556.5, 96, 785, ['41.67', '31.25', '20.84', '10.42', '0', '-10.42', '-20.84', '-31.25', '-41.67']);

const inward = () => -8, outward = () => 8;
frameSupports(954.5, 1050.5, Y1);
sides(954.5, 1050.5, [['top', inward, -1, 8], ['left', inward, -1, 8], ['bottom', outward, 1, 8], ['right', outward, 1, 8]]);
legend(1109.5, 556.5, 96, 1140, Array(9).fill('-50'));

const fall = t => 15 - 30 * t, rise = t => 30 * t - 15;
frameSupports(1275.5, 1370.5, Y1);
sides(1275.5, 1370.5, [['left', rise, 1, 15], ['top', fall, 1, 15], ['bottom', fall, -1, 15], ['right', rise, -1, 15]]);
legend(1429.5, 556.5, 96, 1461, ['50', '37.5', '25', '12.5', '0', '-12.5', '-25', '-37.5', '-50']);

/* Axes */
add('path', { d: 'M264 761V718', stroke: '#008000', 'stroke-width': 2 });
poly([[264, 711], [261, 721], [267, 721]], '#008000');
add('path', { d: 'M264 761H306', stroke: '#f00', 'stroke-width': 2 });
poly([[313, 761], [304, 758], [304, 764]], '#f00');
add('circle', { cx: 264, cy: 761, r: 4, fill: '#00f' });
label(264, 711, 'Y(N)', 'axis');
label(314, 761, 'X(E)', 'axis');
```
